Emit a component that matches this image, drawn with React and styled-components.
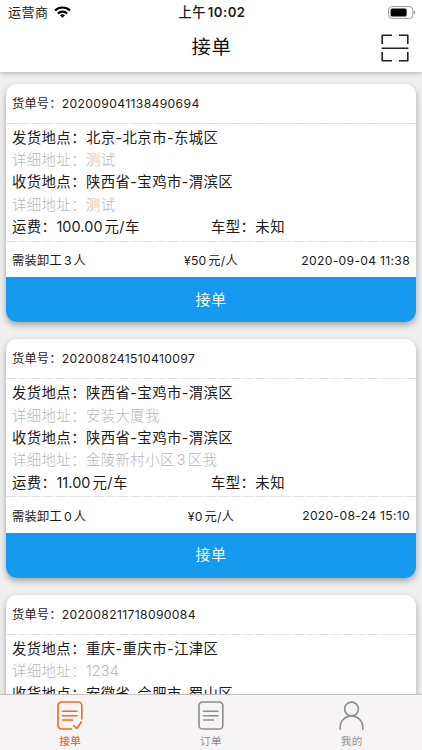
import React from 'react';
import styled, { createGlobalStyle } from 'styled-components';

const Global = createGlobalStyle`
  * { box-sizing: border-box; }
  body { margin: 0; background: #efefef; overflow: hidden; }
`;

const Screen = styled.div`
  width: 422px;
  height: 750px;
  display: flex;
  flex-direction: column;
  overflow: hidden;
  background: #efefef;
  color: #1c1c1c;
  font-family: Inter, "Noto Sans CJK SC", sans-serif;
  white-space: nowrap;
`;

const Header = styled.header`
  flex: none;
  height: 72px;
  background: #fff;
  box-shadow: 0 1px 5px rgba(0, 0, 0, 0.28);
  z-index: 1;
`;

const StatusBar = styled.div`
  height: 24px;
  padding: 0 6px 0 8px;
  display: grid;
  grid-template-columns: 1fr auto 1fr;
  align-items: center;
  font-size: 13px;
  letter-spacing: 0.5px;
  line-height: 23px;
`;

const Carrier = styled.div`
  display: flex;
  align-items: center;
  gap: 5px;
`;

const Clock = styled.div`
  font-weight: 600;
  font-size: 13.2px;
  letter-spacing: 0.45px;
`;

const ClockPrefix = styled.span`
  font-weight: 500;
  margin-right: 2px;
`;

const Battery = styled.svg`
  justify-self: end;
  display: block;
`;

const NavBar = styled.div`
  height: 48px;
  padding: 0 13px 1px 14px;
  display: grid;
  grid-template-columns: 1fr auto 1fr;
  align-items: center;
`;

const Title = styled.h1`
  grid-column: 2;
  margin: 0;
  font-size: 19.4px;
  font-weight: 400;
  letter-spacing: 0.6px;
  line-height: 47px;
  color: #111;
`;

const ScanIcon = styled.svg`
  justify-self: end;
  display: block;
`;

const List = styled.main`
  flex: 1;
  min-height: 0;
  overflow: hidden;
  padding: 11.6px 6px 0;
  display: flex;
  flex-direction: column;
  gap: 17.2px;
`;

const Card = styled.article`
  flex: none;
  height: 238.4px;
  display: flex;
  flex-direction: column;
  background: #fff;
  border-radius: 11px;
  box-shadow: 0 3px 6px rgba(0, 0, 0, 0.32);
`;

const OrderNo = styled.div`
  height: 39px;
  padding: 0 6px;
  line-height: 39px;
  font-size: 12.2px;
  letter-spacing: 0.25px;
`;

const Dash = styled.div`
  flex: none;
  height: 1px;
  background: repeating-linear-gradient(90deg, #e2e2e2 0 10px, #f5f5f5 10px 12.5px);
`;

const Details = styled.div`
  height: 117px;
  padding: 3px 6px 0;
  font-size: 14.4px;
  letter-spacing: 0.4px;
`;

const Row = styled.div`
  height: 22.4px;
  line-height: 22.4px;
  display: flex;
  color: ${(p) => (p.$muted ? '#b8b8b8' : 'inherit')};
  font-weight: ${(p) => (p.$muted ? 300 : 400)};
`;

const Half = styled.div`
  flex: 1;
`;

const Num = styled.span`
  letter-spacing: ${(p) => p.$track || 0}px;
  margin: 0 ${(p) => p.$after || 0}px 0 ${(p) => p.$before || 0}px;
`;

const Meta = styled.div`
  flex: 1;
  padding: 2px 6px 0;
  display: grid;
  grid-template-columns: 1fr auto 1fr;
  align-items: center;
  font-size: 12.2px;
  letter-spacing: 0.3px;
`;

const MetaEnd = styled.div`
  justify-self: end;
`;

const Accept = styled.button`
  flex: none;
  height: 44.8px;
  border: 0;
  padding: 0;
  border-radius: 0 0 11px 11px;
  background: #169af0;
  color: #fff;
  font: 400 15px/44px Inter, "Noto Sans CJK SC", sans-serif;
  letter-spacing: 0.5px;
`;

const TabBar = styled.nav`
  flex: none;
  height: 56px;
  display: grid;
  grid-template-columns: repeat(3, 1fr);
  background: #f6f4f5;
  border-top: 1px solid #c3c3c3;
  z-index: 1;
`;

const Tab = styled.div`
  display: flex;
  flex-direction: column;
  align-items: center;
  padding-top: 5px;
  color: ${(p) => (p.$active ? '#f06c1a' : '#8e8e8e')};
  font-size: 10.6px;
  font-weight: ${(p) => (p.$active ? 500 : 400)};
  line-height: 16px;
  letter-spacing: 0.3px;
`;

const TabIcon = styled.svg`
  width: 30px;
  height: 32px;
  margin-bottom: 2px;
  fill: none;
  stroke: currentColor;
  stroke-width: 1.6;
  stroke-linecap: round;
  stroke-linejoin: round;
`;

const orders = [
  {
    no: '202009041138490694', from: '北京-北京市-东城区', fromDetail: '测试',
    to: '陕西省-宝鸡市-渭滨区', toDetail: '测试', fee: '100.00', workers: '3',
    pay: '50', time: '2020-09-04 11:38',
  },
  {
    no: '202008241510410097', from: '陕西省-宝鸡市-渭滨区', fromDetail: '安装大厦我',
    to: '陕西省-宝鸡市-渭滨区', toDetail: '金陵新村小区3区我', fee: '11.00', workers: '0',
    pay: '0', time: '2020-08-24 15:10',
  },
  {
    no: '202008211718090084', from: '重庆-重庆市-江津区', fromDetail: '1234',
    to: '安徽省-合肥市-蜀山区',
  },
];

// Adds the small gaps that separate a digit run from the Han characters round it.
const spaced = (text) =>
  text.split(/(\d+)/).map((part, i, all) =>
    /^\d+$/.test(part) ? (
      <Num key={i} $track={0.2} $before={i > 0 && !/^$/.test(all[i - 1]) ? 2 : 0} $after={all[i + 1] ? 2 : 0}>{part}</Num>
    ) : part
  );

function OrderCard({ order }) {
  return (
    <Card>
      <OrderNo>货单号：<Num $track={0.33}>{order.no}</Num></OrderNo>
      <Dash />
      <Details>
        <Row>发货地点：{order.from}</Row>
        <Row $muted><span>详细地址：{spaced(order.fromDetail)}</span></Row>
        <Row>收货地点：{order.to}</Row>
        {order.fee && (
          <>
            <Row $muted><span>详细地址：{spaced(order.toDetail)}</span></Row>
            <Row>
              <Half>运费：<Num $track={0.1} $after={2}>{order.fee}</Num>元/车</Half>
              <Half>车型：未知</Half>
            </Row>
          </>
        )}
      </Details>
      {order.fee && (
        <>
          <Dash />
          <Meta>
            <div>需装卸工<Num $before={2} $after={2}>{order.workers}</Num>人</div>
            <div>¥<Num $after={2}>{order.pay}</Num>元/人</div>
            <MetaEnd><Num $track={0.28}>{order.time}</Num></MetaEnd>
          </Meta>
          <Accept>接单</Accept>
        </>
      )}
    </Card>
  );
}

export default function App() {
  return (
    <Screen>
      <Global />
      <Header>
        <StatusBar>
          <Carrier>
            运营商
            <svg width="17" height="12" viewBox="0 0 17 12" fill="none" stroke="#000" strokeWidth="2.1">
              <path d="M1 4.5a10.8 10.8 0 0 1 15 0" />
              <path d="M3.9 7.5a6.6 6.6 0 0 1 9.2 0" />
              <path d="M8.5 11.8 6 9.4a3.6 3.6 0 0 1 5 0Z" fill="#000" stroke="none" />
            </svg>
          </Carrier>
          <Clock><ClockPrefix>上午</ClockPrefix>10:02</Clock>
          <Battery width="28" height="13" viewBox="0 0 28 13">
            <rect x="0.6" y="0.6" width="24.3" height="11.8" rx="3.4" fill="none" stroke="#999" />
            <rect x="2.6" y="2.5" width="16" height="8" rx="1.6" fill="#000" />
            <path d="M26 4.5c1.8.6 1.8 3.4 0 4Z" fill="#999" />
          </Battery>
        </StatusBar>
        <NavBar>
          <Title>接单</Title>
          <ScanIcon width="28" height="28" viewBox="0 0 28 28" fill="none" stroke="#23232b" strokeWidth="1.6" strokeLinejoin="round">
            <path d="M1.2 10V1.2H11M18 1.2h8.8V10M1.2 18v8.8H11M18 26.8h8.8V18M.6 14.2h26.8" />
          </ScanIcon>
        </NavBar>
      </Header>
      <List>
        {orders.map((o) => <OrderCard key={o.no} order={o} />)}
      </List>
      <TabBar>
        <Tab $active>
          <TabIcon viewBox="0 0 30 32">
            <path d="M16.5 29H6.6A3.6 3.6 0 0 1 3 25.4V5.600A3.600 3.600 0 0 1 6.600 2h16.600a3.600 3.600 0 0 1 3.600 3.600V19M7.500 11.200h14.500M7.500 15.700h14.500M7.500 20h10M18.500 25.500l3.300 3 4.500-6.500" />
          </TabIcon>
          接单
        </Tab>
        <Tab>
          <TabIcon viewBox="0 0 30 32">
            <rect x="3" y="2" width="23.800" height="27" rx="3.600" />
            <path d="M7.500 11.200h14.500M7.500 15.700h14.500M7.500 20h10" />
          </TabIcon>
          订单
        </Tab>
        <Tab>
          <TabIcon viewBox="0 0 30 32">
            <circle cx="14.500" cy="9" r="6.900" />
            <path d="M3.200 29.300v-2c0-6.400 5-11.400 11.300-11.400s11.300 5 11.300 11.400v2" />
          </TabIcon>
          我的
        </Tab>
      </TabBar>
    </Screen>
  );
}
